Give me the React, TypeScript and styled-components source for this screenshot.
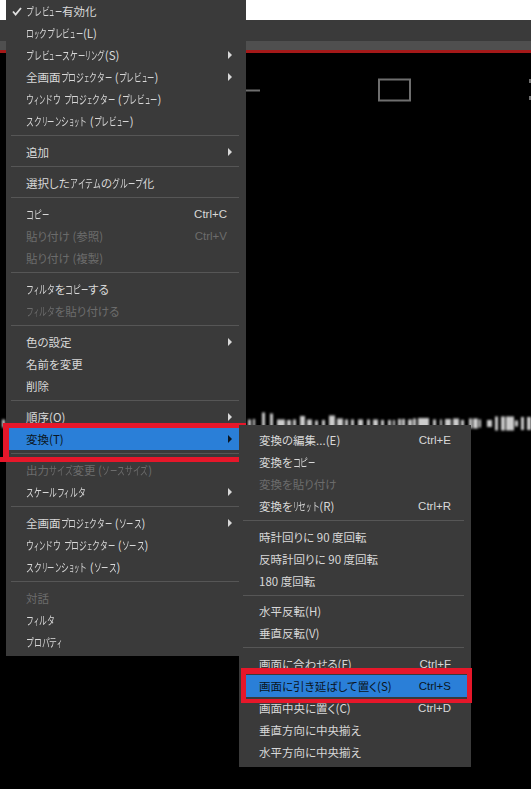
import React from 'react'
import styled, { createGlobalStyle } from 'styled-components'

const GlobalStyle = createGlobalStyle`
  html, body {
    margin: 0;
    padding: 0;
    background: #000;
  }
`

const FONT_SIZE = 11.5

const Page = styled.div`
  position: relative;
  width: 531px;
  height: 789px;
  overflow: hidden;
  background: #000;
  font-family: 'Noto Sans CJK JP', 'Liberation Sans', sans-serif;
`

const TitleBar = styled.div`
  height: 20px;
  background: #fff;
`

const Toolbar = styled.div`
  height: 21px;
  background: #3a3a3a;
`

const Tabs = styled.div`
  height: 9px;
  background: #4f4f4f;
`

const RedLine = styled.div`
  height: 3px;
  background: #a51919;
`

const Preview = styled.svg`
  display: block;
`

const MainMenu = styled.div`
  position: absolute;
  left: 6px;
  top: -4px;
  width: 240px;
  box-sizing: border-box;
  padding: 4px 7px 3px 3px;
  background: #3a3a3a;

  hr {
    margin-left: 2px;
    margin-right: 0;
  }
`

const SubMenu = styled.div`
  position: absolute;
  left: 239px;
  top: 425px;
  width: 232px;
  box-sizing: border-box;
  padding: 4px 4px 4px 7px;
  background: #3a3a3a;

  hr {
    margin-left: -3px;
    margin-right: 3px;
  }
`

const Row = styled.div<{ $disabled?: boolean; $active?: boolean; $indent: number }>`
  position: relative;
  display: flex;
  align-items: center;
  height: 22px;
  padding-left: ${p => p.$indent}px;
  font-size: ${FONT_SIZE}px;
  font-feature-settings: 'palt';
  white-space: nowrap;
  color: ${p => (p.$active ? '#0b1622' : p.$disabled ? '#6c6c6c' : '#d8d8d8')};
  background: ${p => (p.$active ? '#2a7fd8' : 'transparent')};
`

const Label = styled.span`
  flex: 1;
`

// the screenshot's UI font draws katakana much narrower than kanji
const Kana = styled.span<{ $w: number }>`
  display: inline-block;
  width: ${p => p.$w}px;
  font-feature-settings: normal;
  transform: scaleX(${p => p.$w / FONT_SIZE});
  transform-origin: left center;
`

const Shortcut = styled.span<{ $right: number }>`
  margin-right: ${p => p.$right}px;
  font-family: 'Liberation Sans', sans-serif;
  font-size: 11.5px;
`

const Check = styled.svg`
  position: absolute;
  left: 3px;
  top: 7px;
`

const Arrow = styled.i<{ $dark?: boolean }>`
  position: absolute;
  right: 7px;
  top: 7px;
  width: 0;
  height: 0;
  border-style: solid;
  border-width: 4px 0 4px 4px;
  border-color: transparent transparent transparent
    ${p => (p.$dark ? '#0b1622' : '#d8d8d8')};
`

const Separator = styled.hr<{ $tight?: boolean }>`
  height: 1px;
  margin-top: 3px;
  margin-bottom: ${p => (p.$tight ? 4 : 5)}px;
  border: 0;
  background: #565656;
`

const ConvertFrame = styled.div`
  position: absolute;
  top: -5px;
  right: -7px;
  bottom: -12px;
  left: -6px;
  border-style: solid;
  border-color: #e6172a;
  border-width: 5px 7px 5px 6px;

  &::after {
    content: '';
    position: absolute;
    left: -9px;
    bottom: -5px;
    width: 3px;
    height: 5px;
    background: #e6172a;
  }
`

const StretchFrame = styled.div`
  position: absolute;
  top: -7px;
  right: -5px;
  bottom: -6px;
  left: -5px;
  border-style: solid;
  border-color: #e6172a;
  border-width: 6px 5px 4px 5px;
`

type Item =
  | 'sep'
  | 'sep-tight'
  | {
      text: string
      shortcut?: string
      disabled?: boolean
      checked?: boolean
      sub?: boolean
      active?: boolean
      frame?: 'convert' | 'stretch'
    }

const MAIN_ITEMS: Item[] = [
  { text: 'プレビュー有効化', checked: true },
  { text: 'ロックプレビュー(L)' },
  { text: 'プレビュースケーリング(S)', sub: true },
  { text: '全画面プロジェクター (プレビュー)', sub: true },
  { text: 'ウィンドウ プロジェクター (プレビュー)' },
  { text: 'スクリーンショット (プレビュー)' },
  'sep',
  { text: '追加', sub: true },
  'sep',
  { text: '選択したアイテムのグループ化' },
  'sep',
  { text: 'コピー', shortcut: 'Ctrl+C' },
  { text: '貼り付け (参照)', shortcut: 'Ctrl+V', disabled: true },
  { text: '貼り付け (複製)', disabled: true },
  'sep',
  { text: 'フィルタをコピーする' },
  { text: 'フィルタを貼り付ける', disabled: true },
  'sep',
  { text: '色の設定', sub: true },
  { text: '名前を変更' },
  { text: '削除' },
  'sep',
  { text: '順序(O)', sub: true },
  { text: '変換(T)', sub: true, active: true, frame: 'convert' },
  'sep',
  { text: '出力サイズ変更 (ソースサイズ)', disabled: true },
  { text: 'スケールフィルタ', sub: true },
  'sep',
  { text: '全画面プロジェクター (ソース)', sub: true },
  { text: 'ウィンドウ プロジェクター (ソース)' },
  { text: 'スクリーンショット (ソース)' },
  'sep',
  { text: '対話', disabled: true },
  { text: 'フィルタ' },
  { text: 'プロパティ' },
]

const SUB_ITEMS: Item[] = [
  { text: '変換の編集...(E)', shortcut: 'Ctrl+E' },
  { text: '変換をコピー' },
  { text: '変換を貼り付け', disabled: true },
  { text: '変換をリセット(R)', shortcut: 'Ctrl+R' },
  'sep',
  { text: '時計回りに 90 度回転' },
  { text: '反時計回りに 90 度回転' },
  { text: '180 度回転' },
  'sep-tight',
  { text: '水平反転(H)' },
  { text: '垂直反転(V)' },
  'sep',
  { text: '画面に合わせる(F)', shortcut: 'Ctrl+F' },
  { text: '画面に引き延ばして置く(S)', shortcut: 'Ctrl+S', active: true, frame: 'stretch' },
  { text: '画面中央に置く(C)', shortcut: 'Ctrl+D' },
  { text: '垂直方向に中央揃え' },
  { text: '水平方向に中央揃え' },
]

// x, width, height of the audio bars showing between the menus
const WAVE: [number, number, number][] = [
  [2, 3, 8], [248, 3, 8], [253, 2, 9], [262, 3, 22], [270, 3, 20], [277, 8, 8],
  [287, 4, 7], [293, 3, 8], [300, 5, 15], [307, 5, 8], [315, 3, 6], [322, 3, 7],
  [329, 6, 16], [337, 6, 10], [345, 3, 8], [351, 3, 8], [358, 5, 8], [367, 3, 8],
  [373, 5, 8], [381, 3, 7], [388, 3, 7], [393, 2, 7], [398, 3, 9], [402, 3, 9],
  [408, 4, 8], [413, 3, 10], [418, 8, 11], [426, 3, 11], [433, 3, 8], [440, 2, 8],
  [445, 6, 9], [453, 6, 10], [461, 3, 7], [469, 3, 10], [473, 5, 10], [479, 2, 8],
  [487, 5, 7], [495, 3, 14], [501, 4, 14], [506, 8, 14], [515, 3, 6], [521, 3, 13],
  [527, 4, 13],
]

const kanaWidth = (ch: string) => {
  if ('ァィゥェォッャュョ'.includes(ch)) return 5.3
  if (ch === 'リ') return 5.8
  if (ch === 'ン') return 6.3
  if (ch === 'ー') return 7.3
  return 7.8
}

const renderLabel = (text: string) =>
  Array.from(text).map((ch, i) =>
    /[\u30A1-\u30FC]/.test(ch) ? (
      <Kana key={i} $w={kanaWidth(ch)}>
        {ch}
      </Kana>
    ) : (
      ch
    ),
  )

const MenuRows = ({ items, indent, shortcutRight }: { items: Item[]; indent: number; shortcutRight: number }) => (
  <>
    {items.map((item, i) =>
      typeof item === 'string' ? (
        <Separator key={i} $tight={item === 'sep-tight'} />
      ) : (
        <Row key={i} $disabled={item.disabled} $active={item.active} $indent={indent}>
          {item.checked && (
            <Check width="10" height="9" viewBox="0 0 10 9">
              <path d="M1 4.5 L3.6 7.5 L9 1" fill="none" stroke="#e0e0e0" strokeWidth="1.8" />
            </Check>
          )}
          <Label>{renderLabel(item.text)}</Label>
          {item.shortcut && <Shortcut $right={shortcutRight}>{item.shortcut}</Shortcut>}
          {item.sub && <Arrow $dark={item.active} />}
          {item.frame === 'convert' && <ConvertFrame />}
          {item.frame === 'stretch' && <StretchFrame />}
        </Row>
      ),
    )}
  </>
)

const App = () => (
  <Page>
    <GlobalStyle />
    <TitleBar />
    <Toolbar />
    <Tabs />
    <RedLine />
    <Preview width="531" height="736" viewBox="0 53 531 736">
      <defs>
        <filter id="soft">
          <feGaussianBlur stdDeviation="1" />
        </filter>
      </defs>
      <g fill="none" stroke="#6e6e6e" strokeWidth="2">
        <path d="M240 90.5 H260" />
        <rect x="379" y="79.5" width="31" height="21" />
        <path d="M530 79 V83 M530 96 V100" />
      </g>
      <g fill="#cccccc" filter="url(#soft)">
        {WAVE.map(([x, w, h]) => (
          <rect key={x} x={x} y={423.5 - h / 2} width={w} height={h} />
        ))}
      </g>
    </Preview>
    <MainMenu>
      <MenuRows items={MAIN_ITEMS} indent={17} shortcutRight={12} />
    </MainMenu>
    <SubMenu>
      <MenuRows items={SUB_ITEMS} indent={13} shortcutRight={16} />
    </SubMenu>
  </Page>
)

export default App
